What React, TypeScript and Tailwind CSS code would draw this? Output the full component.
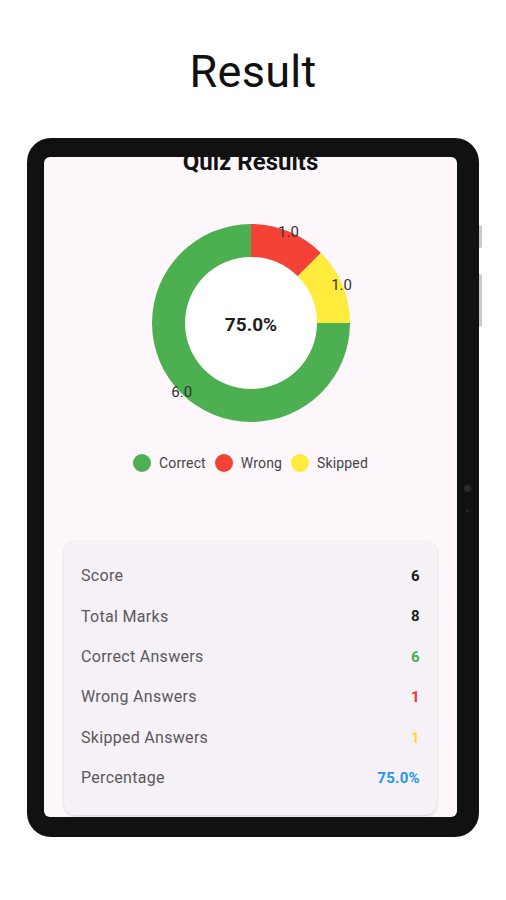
import React from "react";

const CX = 130;
const CY = 130;
const R = 99;
const RI = 66;

function pt(r: number, deg: number): [number, number] {
  const a = (deg * Math.PI) / 180;
  return [CX + r * Math.sin(a), CY - r * Math.cos(a)];
}

function sector(a0: number, a1: number): string {
  const [x0, y0] = pt(R, a0);
  const [x1, y1] = pt(R, a1);
  const [x2, y2] = pt(RI, a1);
  const [x3, y3] = pt(RI, a0);
  const large = a1 - a0 > 180 ? 1 : 0;
  return `M ${x0} ${y0} A ${R} ${R} 0 ${large} 1 ${x1} ${y1} L ${x2} ${y2} A ${RI} ${RI} 0 ${large} 0 ${x3} ${y3} Z`;
}

const slices = [
  { a0: 0, a1: 45, color: "#f44336", label: "1.0" },
  { a0: 45, a1: 90, color: "#ffeb3b", label: "1.0" },
  { a0: 90, a1: 360, color: "#4caf50", label: "6.0" },
];

function Donut() {
  return (
    <svg width="260" height="260" viewBox="0 0 260 260">
      <circle cx={CX} cy={CY} r={RI} fill="#ffffff" />
      {slices.map((s, i) => (
        <path key={i} d={sector(s.a0, s.a1)} fill={s.color} />
      ))}
      {slices.map((s, i) => {
        const [x, y] = pt(98, (s.a0 + s.a1) / 2);
        return (
          <text
            key={"t" + i}
            x={x}
            y={y}
            textAnchor="middle"
            dominantBaseline="central"
            fontSize="15"
            fill="#333333"
            fontFamily="Roboto, sans-serif"
          >
            {s.label}
          </text>
        );
      })}
      <text
        x={CX}
        y={CY + 1}
        textAnchor="middle"
        dominantBaseline="central"
        fontSize="19"
        fontWeight="700"
        fill="#1f1f1f"
        fontFamily="Roboto, sans-serif"
      >
        75.0%
      </text>
    </svg>
  );
}

const rows = [
  { label: "Score", value: "6", color: "text-[#1c1b1f]" },
  { label: "Total Marks", value: "8", color: "text-[#1c1b1f]" },
  { label: "Correct Answers", value: "6", color: "text-[#4caf50]" },
  { label: "Wrong Answers", value: "1", color: "text-[#e53935]" },
  { label: "Skipped Answers", value: "1", color: "text-[#fdd835]" },
  { label: "Percentage", value: "75.0%", color: "text-[#2196f3]" },
];

export default function App() {
  return (
    <div className="w-[506px] h-[900px] bg-white font-['Roboto',sans-serif] overflow-hidden">
      <div className="pt-[45px] h-[99px] text-center">
        <div className="text-[45px] leading-[54px] text-[#111111] tracking-[0.3px]">Result</div>
      </div>
      <div className="relative mx-auto mt-[39px] w-[452px] h-[699px] bg-[#111111] rounded-[24px] pl-[17px] pr-[22px] pt-[19px] pb-[20px]">
        <div className="absolute right-[-3px] top-[87px] w-[3px] h-[23px] bg-[#c9c9c9] rounded-r-[2px]" />
        <div className="absolute right-[-3px] top-[136px] w-[3px] h-[53px] bg-[#c9c9c9] rounded-r-[2px]" />
        <div className="absolute left-[437px] top-[347px] w-[7px] h-[7px] rounded-full bg-[#2a2a2a]" />
        <div className="absolute left-[439px] top-[371px] w-[3px] h-[3px] rounded-full bg-[#262626]" />
        <div className="w-full h-full bg-[#fdf7fc] rounded-[6px] overflow-hidden flex flex-col items-center">
          <div className="mt-[-9px] text-[24px] leading-[28px] font-bold text-[#111111]">Quiz Results</div>
          <div className="mt-[17px]">
            <Donut />
          </div>
          <div className="mt-[1px] h-[18px] flex items-center text-[14px] text-[#444444] tracking-[0.15px]">
            <span className="w-[18px] h-[18px] rounded-full bg-[#4caf50]" />
            <span className="ml-[8px]">Correct</span>
            <span className="ml-[9px] w-[18px] h-[18px] rounded-full bg-[#f44336]" />
            <span className="ml-[8px]">Wrong</span>
            <span className="ml-[9px] w-[18px] h-[18px] rounded-full bg-[#ffeb3b]" />
            <span className="ml-[8px]">Skipped</span>
          </div>
          <div className="mt-[69px] w-[373px] bg-[#f5f1f6] rounded-[12px] shadow-[0_1px_3px_rgba(0,0,0,0.18)] px-[17px] pt-[15px] pb-[17px] flex flex-col">
            {rows.map((r) => (
              <div key={r.label} className="h-[40.4px] flex items-center justify-between text-[16px] tracking-[0.3px]">
                <span className="text-[#5a585d]">{r.label}</span>
                <span className={"font-bold text-[15px] " + r.color}>{r.value}</span>
              </div>
            ))}
          </div>
        </div>
      </div>
    </div>
  );
}
